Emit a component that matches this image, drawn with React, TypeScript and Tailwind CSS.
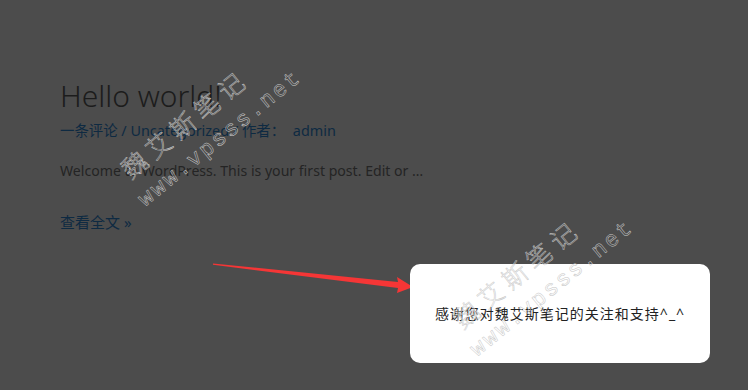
import React from "react";

const sans = '"Noto Sans", "Open Sans", "Noto Sans CJK SC", sans-serif';

function Watermark({ x, y }: { x: number; y: number }) {
  return (
    <g transform={`translate(${x} ${y}) rotate(-39)`} fill="none" stroke="#c8c8c8" strokeWidth={0.5}>
      <text
        x={6}
        y={-30}
        fontSize={25}
        letterSpacing={6}
        fontFamily='"Noto Sans CJK SC", sans-serif'
        fontWeight={300}
      >
        魏艾斯笔记
      </text>
      <text x={0} y={0} fontSize={22} letterSpacing={2.4} fontFamily='"Liberation Mono", monospace'>
        www.vpsss.net
      </text>
    </g>
  );
}

export default function App() {
  return (
    <div className="relative w-[748px] h-[390px] overflow-hidden bg-[#4c4c4c]" style={{ fontFamily: sans }}>
      <div className="flex flex-col pl-[60px] pt-[76px]">
        <h1 className="text-[30px] leading-[40px] font-light text-[#1c1c1c]">Hello world!</h1>
        <div className="mt-[5px] text-[14.4px] leading-[20px] text-[#0e2a42]">
          一条评论 / Uncategorized / 作者： <span className="ml-[4px]">admin</span>
        </div>
        <p className="mt-[19px] text-[14.1px] leading-[22px] text-[#242424]">
          Welcome to WordPress. This is your first post. Edit or …
        </p>
        <a className="mt-[29px] text-[15px] leading-[22px] text-[#0e2a42]">查看全文 »</a>
      </div>

      <svg className="absolute left-0 top-0 pointer-events-none" width={748} height={390}>
        <polygon
          points="213,263.5 398,282 397,277 413,287 397,293 398,288 213,264.8"
          fill="#f53636"
        />
      </svg>

      <div className="absolute left-[410px] top-[264px] w-[300px] h-[99px] rounded-[10px] bg-white flex items-center justify-center">
        <span className="text-[14px] tracking-[1px] text-[#222]">感谢您对魏艾斯笔记的关注和支持^_^</span>
      </div>

      <svg className="absolute left-0 top-0 pointer-events-none" width={748} height={390}>
        <Watermark x={145} y={207} />
        <Watermark x={477} y={357} />
      </svg>
    </div>
  );
}
